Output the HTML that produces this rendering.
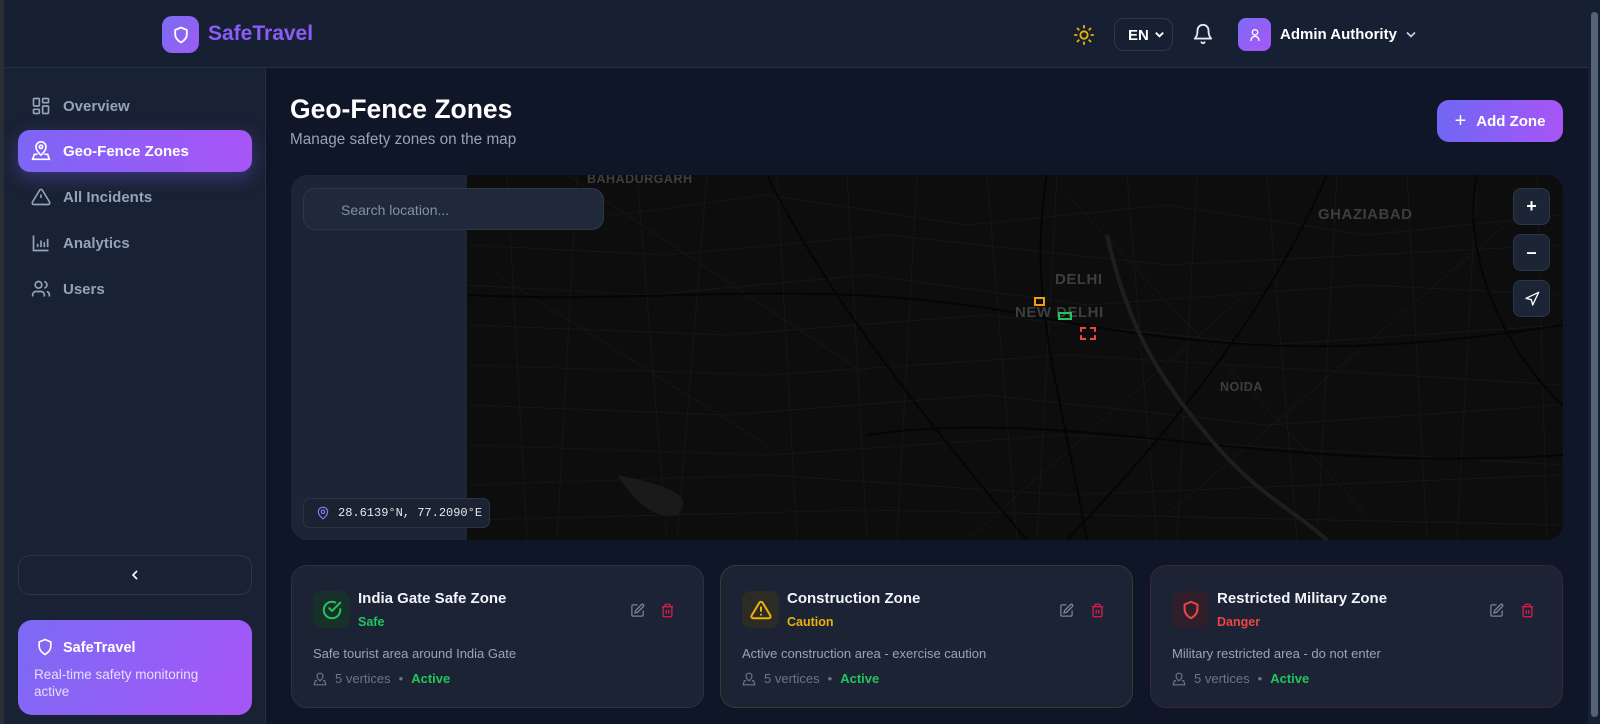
<!DOCTYPE html>
<html><head><meta charset="utf-8"><style>
*{box-sizing:border-box;margin:0;padding:0}
body{width:1600px;height:724px;overflow:hidden;background:#0e1628;font-family:"Liberation Sans",sans-serif;position:relative;color:#e5e7eb}
.a{position:absolute}
svg{display:block}
.hdr{left:4px;top:0;width:1584px;height:68px;background:#172032;border-bottom:1px solid #243044}
.side{left:4px;top:68px;width:262px;height:656px;background:#192234;border-right:1px solid #223047}
.nav{left:18px;width:234px;height:42px;display:flex;align-items:center;padding-left:13px;gap:12px;font-size:15px;font-weight:bold;color:#94a3b8;border-radius:12px}
.nav.on{background:linear-gradient(90deg,#7c66f5,#a855f7);color:#fff;box-shadow:0 6px 18px rgba(124,92,246,.35)}
.card{top:565px;width:413px;height:143px;background:#1b2335;border-radius:16px;border:1px solid #2a3548}
.ib{left:21px;top:25px;width:37px;height:37px;border-radius:9px;display:flex;align-items:center;justify-content:center}
.ct{left:66px;top:24px;font-size:15px;font-weight:bold;color:#f1f5f9}
.cs{left:66px;top:49px;font-size:12.5px;font-weight:bold}
.cd{left:21px;top:80px;font-size:13px;color:#9aa4b5}
.cm{left:21px;top:105px;font-size:13px;color:#6b7587;display:flex;align-items:center;gap:8px}
.zb{left:1513px;width:37px;height:37px;background:#1c2536;border:1px solid #2c3649;border-radius:8px;display:flex;align-items:center;justify-content:center;color:#fff;font-weight:bold;font-size:18px}
.lbl{font-weight:bold;color:#3e3e3e;letter-spacing:.5px}
</style></head><body>
<div class="a" style="left:0;top:0;width:4px;height:724px;background:#2a2e36"></div>
<div class="a" style="left:1588px;top:0;width:12px;height:724px;background:#172032"></div>
<div class="a" style="left:1591px;top:12px;width:7px;height:705px;background:#56647a;border-radius:4px"></div>

<div class="a hdr"></div>
<div class="a" style="left:162px;top:16px;width:37px;height:37px;border-radius:10px;background:linear-gradient(135deg,#7c6cf6,#9b5cf2);display:flex;align-items:center;justify-content:center">
<svg width="20" height="20" viewBox="0 0 24 24" fill="none" stroke="#fff" stroke-width="2.2" stroke-linejoin="round"><path d="M12 3l7 3v5c0 5-3.5 8-7 10-3.5-2-7-5-7-10V6z"/></svg></div>
<div class="a" style="left:208px;top:22px;font-size:21px;font-weight:bold;color:#8b5cf6">SafeTravel</div>

<svg class="a" style="left:1073px;top:24px" width="22" height="22" viewBox="0 0 24 24" fill="none" stroke="#eab308" stroke-width="2" stroke-linecap="round"><circle cx="12" cy="12" r="4"/><path d="M12 2v2M12 20v2M2 12h2M20 12h2M4.9 4.9l1.4 1.4M17.7 17.7l1.4 1.4M4.9 19.1l1.4-1.4M17.7 6.3l1.4-1.4"/></svg>
<div class="a" style="left:1114px;top:18px;width:59px;height:33px;border:1px solid #2d384b;border-radius:10px;font-size:15px;font-weight:bold;color:#fff;padding:8px 0 0 13px">EN</div>
<svg class="a" style="left:1154px;top:30px" width="11" height="9" viewBox="0 0 12 8" fill="none" stroke="#fff" stroke-width="2"><path d="M2 2l4 4 4-4"/></svg>
<svg class="a" style="left:1192px;top:23px" width="22" height="22" viewBox="0 0 24 24" fill="none" stroke="#e5e7eb" stroke-width="2" stroke-linecap="round" stroke-linejoin="round"><path d="M6 8a6 6 0 0112 0c0 7 3 9 3 9H3s3-2 3-9M10.3 21a1.9 1.9 0 003.4 0"/></svg>
<div class="a" style="left:1238px;top:18px;width:33px;height:33px;border-radius:8px;background:linear-gradient(135deg,#7c6cf6,#a855f7);display:flex;align-items:center;justify-content:center">
<svg width="16" height="16" viewBox="0 0 24 24" fill="none" stroke="#fff" stroke-width="2"><circle cx="12" cy="8" r="4"/><path d="M4 21v-1a6 6 0 0112 0v1" transform="translate(2 0)"/></svg></div>
<div class="a" style="left:1280px;top:26px;font-size:15px;font-weight:bold;color:#fff">Admin Authority</div>
<svg class="a" style="left:1405px;top:30px" width="12" height="9" viewBox="0 0 12 8" fill="none" stroke="#cbd5e1" stroke-width="1.6"><path d="M2 2l4 4 4-4"/></svg>

<div class="a side"></div>
<div class="a nav" style="top:85px"><svg width="20" height="20" viewBox="0 0 24 24" fill="none" stroke="#94a3b8" stroke-width="2"><rect x="3" y="3" width="7" height="9" rx="1"/><rect x="14" y="3" width="7" height="5" rx="1"/><rect x="14" y="12" width="7" height="9" rx="1"/><rect x="3" y="16" width="7" height="5" rx="1"/></svg>Overview</div>
<div class="a nav on" style="top:130px"><svg width="20" height="20" viewBox="0 0 24 24" fill="none" stroke="#fff" stroke-width="2"><path d="M12 17s6-5 6-10A6 6 0 006 7c0 5 6 10 6 10z"/><circle cx="12" cy="7" r="2"/><path d="M8 16H4l-2 6h20l-2-6h-4"/></svg>Geo-Fence Zones</div>
<div class="a nav" style="top:176px"><svg width="20" height="20" viewBox="0 0 24 24" fill="none" stroke="#94a3b8" stroke-width="2"><path d="M10.3 3.9L1.8 18a2 2 0 001.7 3h17a2 2 0 001.7-3L13.7 3.9a2 2 0 00-3.4 0zM12 9v4M12 17h.01"/></svg>All Incidents</div>
<div class="a nav" style="top:222px"><svg width="20" height="20" viewBox="0 0 24 24" fill="none" stroke="#94a3b8" stroke-width="2"><path d="M3 3v18h18M8 17v-4M12 17V9M16 17v-6M20 17V7"/></svg>Analytics</div>
<div class="a nav" style="top:268px"><svg width="20" height="20" viewBox="0 0 24 24" fill="none" stroke="#94a3b8" stroke-width="2"><circle cx="9" cy="7" r="4"/><path d="M2 21v-2a4 4 0 014-4h6a4 4 0 014 4v2M16 3.1a4 4 0 010 7.8M22 21v-2a4 4 0 00-3-3.9"/></svg>Users</div>

<div class="a" style="left:18px;top:555px;width:234px;height:40px;border:1px solid #2c3649;border-radius:12px;display:flex;align-items:center;justify-content:center"><svg width="12" height="12" viewBox="0 0 12 12" fill="none" stroke="#fff" stroke-width="1.6"><path d="M8 2L4 6l4 4"/></svg></div>
<div class="a" style="left:18px;top:620px;width:234px;height:95px;border-radius:14px;background:linear-gradient(120deg,#7b6bf4,#a855f7)">
<svg class="a" style="left:17px;top:17px" width="20" height="20" viewBox="0 0 24 24" fill="none" stroke="#fff" stroke-width="2" stroke-linejoin="round"><path d="M12 3l7 3v5c0 5-3.5 8-7 10-3.5-2-7-5-7-10V6z"/></svg>
<div class="a" style="left:45px;top:20px;font-size:14.5px;font-weight:bold;color:#fff">SafeTravel</div>
<div class="a" style="left:16px;top:46px;font-size:13.5px;line-height:17px;color:#e6ddff;width:180px">Real-time safety monitoring active</div></div>

<div class="a" style="left:290px;top:94px;font-size:26.5px;font-weight:bold;color:#fff">Geo-Fence Zones</div>
<div class="a" style="left:290px;top:131px;font-size:15.3px;color:#94a3b8">Manage safety zones on the map</div>
<div class="a" style="left:1437px;top:100px;width:126px;height:42px;border-radius:12px;background:linear-gradient(90deg,#6f67f3,#a855f7);display:flex;align-items:center;justify-content:center;gap:10px;font-size:15px;font-weight:bold;color:#fff"><span style="font-size:20px;font-weight:normal">+</span>Add Zone</div>

<div class="a" style="left:291px;top:175px;width:1272px;height:365px;border-radius:16px;overflow:hidden;background:#0d0d0d">
<div class="a" style="left:0;top:0;width:176px;height:365px;background:#1c2536"></div>
<svg class="a" style="left:176px;top:0" width="1096" height="365" viewBox="0 0 1096 365" fill="none">
<g stroke="#181818" stroke-width="0.8">
<path d="M0 30 L150 40 L300 20 L500 50 L700 30 L900 60 L1096 40"/><path d="M0 70 L200 80 L420 60 L700 90 L1096 70"/>
<path d="M0 110 L180 120 L400 100 L620 130 L900 110 L1096 120"/><path d="M0 150 L260 160 L520 140 L800 170 L1096 150"/>
<path d="M0 190 L300 200 L600 180 L1096 210"/><path d="M0 230 L260 240 L520 220 L800 250 L1096 230"/>
<path d="M0 270 L300 280 L600 260 L1096 290"/><path d="M0 310 L300 300 L600 320 L1096 300"/><path d="M0 345 L400 335 L1096 350"/>
<path d="M40 0 L60 365"/><path d="M110 0 L90 365"/><path d="M170 0 L200 365"/><path d="M240 0 L210 365"/><path d="M310 0 L330 365"/><path d="M380 0 L400 365"/><path d="M450 0 L430 365"/><path d="M520 0 L550 365"/><path d="M590 0 L570 365"/><path d="M660 0 L690 365"/><path d="M730 0 L710 365"/><path d="M800 0 L830 365"/><path d="M870 0 L850 365"/><path d="M940 0 L960 365"/><path d="M1010 0 L990 365"/><path d="M1070 0 L1080 365"/>
<path d="M30 100 L300 270"/><path d="M600 20 L900 340"/><path d="M700 340 L1050 40"/><path d="M100 0 L400 200"/><path d="M500 365 L800 100"/>
</g>
<g stroke="#050505" stroke-width="2">
<path d="M0 120 C200 130 350 100 560 140 S900 180 1096 150"/><path d="M300 0 C350 100 420 200 560 365"/>
<path d="M580 0 C560 120 590 200 620 365"/><path d="M860 0 C800 140 700 260 600 365"/><path d="M400 260 C600 230 800 300 1096 280"/>
<path d="M1010 0 C990 100 1060 200 1096 230"/>
</g>
<path d="M640 60 C660 150 690 200 740 260 S820 330 860 365" stroke="#1e1e1e" stroke-width="4"/>
<path d="M150 300 C200 310 230 320 210 340 C190 345 170 330 150 300z" fill="#1a1a1a"/>
</svg>
<div class="a lbl" style="left:296px;top:-3px;font-size:12.5px">BAHADURGARH</div>
<div class="a lbl" style="left:1027px;top:31px;font-size:15px">GHAZIABAD</div>
<div class="a lbl" style="left:764px;top:96px;font-size:15px">DELHI</div>
<div class="a lbl" style="left:724px;top:129px;font-size:15px">NEW DELHI</div>
<div class="a lbl" style="left:929px;top:205px;font-size:12.5px">NOIDA</div>
<div class="a" style="left:743px;top:122px;width:11px;height:9px;border:2px solid #f59e0b"></div>
<div class="a" style="left:767px;top:137px;width:14px;height:8px;border:2px solid #22c55e"></div>
<div class="a" style="left:789px;top:152px;width:16px;height:13px;border:2px dashed #ef4444"></div>
<div class="a" style="left:12px;top:13px;width:301px;height:42px;background:#1f2939;border:1px solid #2c3649;border-radius:12px;font-size:14px;color:#8391a5;padding:13px 0 0 37px">Search location...</div>
<div class="a" style="left:12px;top:323px;width:187px;height:30px;background:#1b2332;border:1px solid #2a3446;border-radius:7px;font-family:'Liberation Mono',monospace;font-size:12px;color:#e5e7eb;display:flex;align-items:center;gap:8px;padding-left:12px"><svg width="14" height="14" viewBox="0 0 24 24" fill="none" stroke="#8b7cf6" stroke-width="2"><path d="M12 22s8-6 8-12a8 8 0 00-16 0c0 6 8 12 8 12z"/><circle cx="12" cy="10" r="3"/></svg>28.6139°N, 77.2090°E</div>
</div>
<div class="a zb" style="top:188px">+</div>
<div class="a zb" style="top:234px">–</div>
<div class="a zb" style="top:280px"><svg width="16" height="16" viewBox="0 0 24 24" fill="none" stroke="#fff" stroke-width="2" stroke-linejoin="round"><path d="M3 11l19-9-9 19-2-8z"/></svg></div>

<div class="a card" style="left:291px;border-color:#1f3a3f">
<div class="a ib" style="background:#173029"><svg width="22" height="22" viewBox="0 0 24 24" fill="none" stroke="#22c55e" stroke-width="2.2" stroke-linecap="round"><path d="M21 11.1V12a9 9 0 11-5.3-8.2"/><path d="M21 4L12 13l-3-3"/></svg></div>
<div class="a ct">India Gate Safe Zone</div><div class="a cs" style="color:#22c55e">Safe</div>
<div class="a cd">Safe tourist area around India Gate</div>
<div class="a cm"><svg width="14" height="14" viewBox="0 0 24 24" fill="none" stroke="#6b7587" stroke-width="2"><path d="M12 15s5-4 5-8a5 5 0 00-10 0c0 4 5 8 5 8z"/><path d="M7 15H4l-2 7h20l-2-7h-3"/></svg>5 vertices <span>•</span> <b style="color:#22c55e;font-weight:bold">Active</b></div>
</div>
<div class="a card" style="left:720px;border-color:#3a3a32">
<div class="a ib" style="background:#2c2b26"><svg width="22" height="22" viewBox="0 0 24 24" fill="none" stroke="#eab308" stroke-width="2.2" stroke-linecap="round"><path d="M10.3 3.9L1.8 18a2 2 0 001.7 3h17a2 2 0 001.7-3L13.7 3.9a2 2 0 00-3.4 0zM12 9v4M12 17h.01"/></svg></div>
<div class="a ct">Construction Zone</div><div class="a cs" style="color:#eab308">Caution</div>
<div class="a cd">Active construction area - exercise caution</div>
<div class="a cm"><svg width="14" height="14" viewBox="0 0 24 24" fill="none" stroke="#6b7587" stroke-width="2"><path d="M12 15s5-4 5-8a5 5 0 00-10 0c0 4 5 8 5 8z"/><path d="M7 15H4l-2 7h20l-2-7h-3"/></svg>5 vertices <span>•</span> <b style="color:#22c55e">Active</b></div>
</div>
<div class="a card" style="left:1150px;border-color:#3b2634">
<div class="a ib" style="background:#2e1f2a"><svg width="22" height="22" viewBox="0 0 24 24" fill="none" stroke="#ef4444" stroke-width="2.2" stroke-linejoin="round"><path d="M12 3l7 3v5c0 5-3.5 8-7 10-3.5-2-7-5-7-10V6z"/></svg></div>
<div class="a ct">Restricted Military Zone</div><div class="a cs" style="color:#ef4444">Danger</div>
<div class="a cd">Military restricted area - do not enter</div>
<div class="a cm"><svg width="14" height="14" viewBox="0 0 24 24" fill="none" stroke="#6b7587" stroke-width="2"><path d="M12 15s5-4 5-8a5 5 0 00-10 0c0 4 5 8 5 8z"/><path d="M7 15H4l-2 7h20l-2-7h-3"/></svg>5 vertices <span>•</span> <b style="color:#22c55e">Active</b></div>
</div>
<svg class="a" style="left:630px;top:603px" width="15" height="15" viewBox="0 0 24 24" fill="none" stroke="#7b8597" stroke-width="2"><path d="M12 3H5a2 2 0 00-2 2v14a2 2 0 002 2h14a2 2 0 002-2v-7"/><path d="M18.4 2.6a2.1 2.1 0 013 3L12 15l-4 1 1-4z"/></svg>
<svg class="a" style="left:660px;top:603px" width="15" height="15" viewBox="0 0 24 24" fill="none" stroke="#e11d48" stroke-width="2"><path d="M3 6h18M19 6v14a2 2 0 01-2 2H7a2 2 0 01-2-2V6M8 6V4a2 2 0 012-2h4a2 2 0 012 2v2M10 11v6M14 11v6"/></svg>
<svg class="a" style="left:1059px;top:603px" width="15" height="15" viewBox="0 0 24 24" fill="none" stroke="#7b8597" stroke-width="2"><path d="M12 3H5a2 2 0 00-2 2v14a2 2 0 002 2h14a2 2 0 002-2v-7"/><path d="M18.4 2.6a2.1 2.1 0 013 3L12 15l-4 1 1-4z"/></svg>
<svg class="a" style="left:1090px;top:603px" width="15" height="15" viewBox="0 0 24 24" fill="none" stroke="#e11d48" stroke-width="2"><path d="M3 6h18M19 6v14a2 2 0 01-2 2H7a2 2 0 01-2-2V6M8 6V4a2 2 0 012-2h4a2 2 0 012 2v2M10 11v6M14 11v6"/></svg>
<svg class="a" style="left:1489px;top:603px" width="15" height="15" viewBox="0 0 24 24" fill="none" stroke="#7b8597" stroke-width="2"><path d="M12 3H5a2 2 0 00-2 2v14a2 2 0 002 2h14a2 2 0 002-2v-7"/><path d="M18.4 2.6a2.1 2.1 0 013 3L12 15l-4 1 1-4z"/></svg>
<svg class="a" style="left:1520px;top:603px" width="15" height="15" viewBox="0 0 24 24" fill="none" stroke="#e11d48" stroke-width="2"><path d="M3 6h18M19 6v14a2 2 0 01-2 2H7a2 2 0 01-2-2V6M8 6V4a2 2 0 012-2h4a2 2 0 012 2v2M10 11v6M14 11v6"/></svg>
</body></html>
